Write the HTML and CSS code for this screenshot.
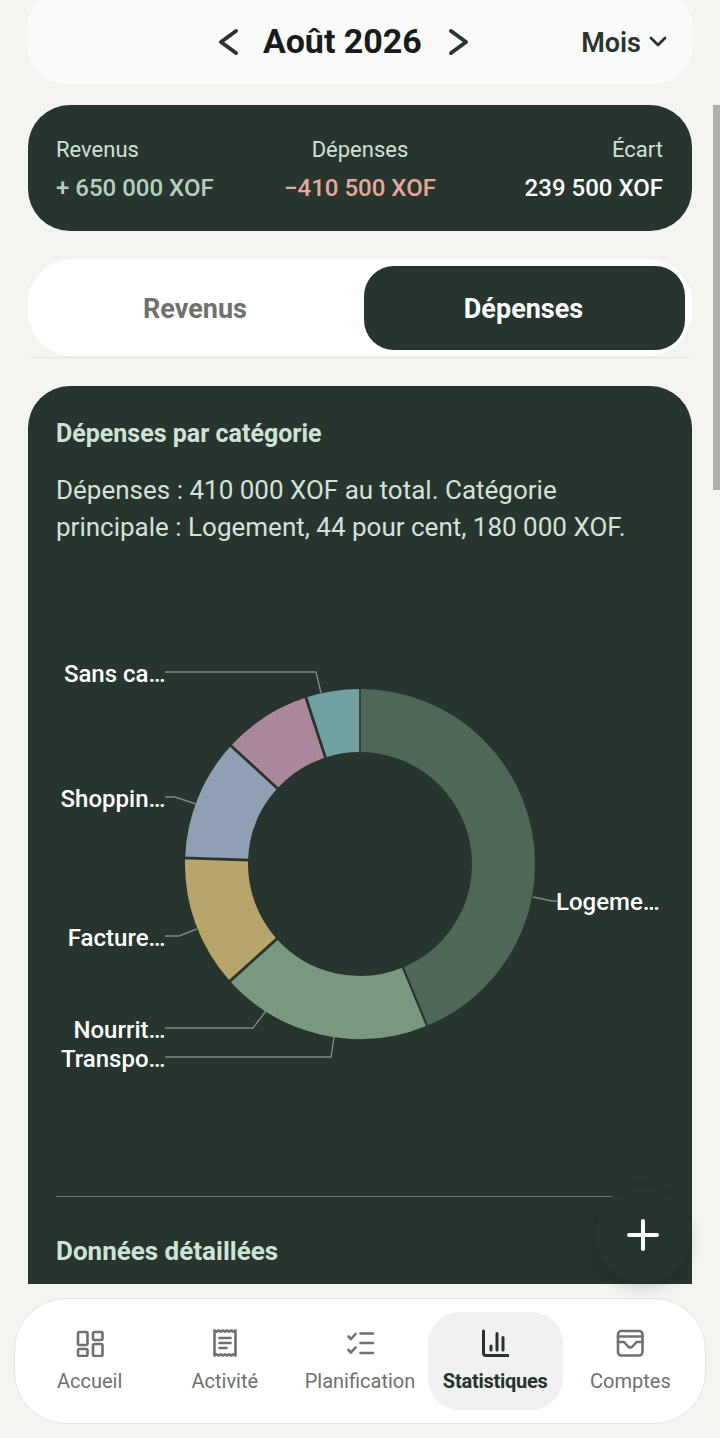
FILE: index.html
```html
<!DOCTYPE html>
<html lang="fr">
<head>
<meta charset="utf-8">
<title>Statistiques</title>
<link rel="stylesheet" href="styles.css">
</head>
<body>
<div class="app">
  <main class="content">
    <header class="period">
      <div class="period-nav">
        <svg class="chev" viewBox="0 0 20 28"><path d="M18 3 3 14l15 11"/></svg>
        <h1 class="period-title">Août 2026</h1>
        <svg class="chev" viewBox="0 0 20 28"><path d="M4 3l15 11L4 25"/></svg>
      </div>
      <div class="range">Mois<svg class="chev-small" viewBox="0 0 18 12"><path d="M2 2l7 7 7-7"/></svg></div>
    </header>

    <section class="summary">
      <div class="sum-col"><span class="sum-label">Revenus</span><span class="sum-value income">+ 650 000 XOF</span></div>
      <div class="sum-col center"><span class="sum-label">Dépenses</span><span class="sum-value expense">−410 500 XOF</span></div>
      <div class="sum-col right"><span class="sum-label">Écart</span><span class="sum-value net">239 500 XOF</span></div>
    </section>

    <div class="tabs-wrap">
      <div class="tabs">
        <div class="tab">Revenus</div>
        <div class="tab active">Dépenses</div>
      </div>
    </div>

    <section class="card">
      <h2 class="card-title">Dépenses par catégorie</h2>
      <p class="card-desc">Dépenses : 410 000 XOF au total. Catégorie principale : Logement, 44 pour cent, 180 000 XOF.</p>
      <svg class="chart" viewBox="28 560 664 620">
        <g fill="none" stroke-width="63">
          <circle cx="360" cy="864" r="143.5" pathLength="360" stroke="#4e6757" stroke-dasharray="157.5 202.5" transform="rotate(-90 360 864)"/>
          <circle cx="360" cy="864" r="143.5" pathLength="360" stroke="#789880" stroke-dasharray="70.5 289.5" transform="rotate(67.5 360 864)"/>
          <circle cx="360" cy="864" r="143.5" pathLength="360" stroke="#b8a56c" stroke-dasharray="44 316" transform="rotate(138 360 864)"/>
          <circle cx="360" cy="864" r="143.5" pathLength="360" stroke="#909fb3" stroke-dasharray="40.5 319.5" transform="rotate(182 360 864)"/>
          <circle cx="360" cy="864" r="143.5" pathLength="360" stroke="#ab879b" stroke-dasharray="30 330" transform="rotate(222.5 360 864)"/>
          <circle cx="360" cy="864" r="143.5" pathLength="360" stroke="#70a0a0" stroke-dasharray="18 342" transform="rotate(252 360 864)"/>
        </g>
        <g class="seps" transform="translate(360 864)">
          <line y1="-110" y2="-178"/>
          <line class="mid" y1="-110" y2="-178" transform="rotate(157.5)"/>
          <line class="thick" y1="-110" y2="-178" transform="rotate(228)"/>
          <line class="thick" y1="-110" y2="-178" transform="rotate(272)"/>
          <line class="thick" y1="-110" y2="-178" transform="rotate(312.5)"/>
          <line class="thick" y1="-110" y2="-178" transform="rotate(342)"/>
        </g>
        <g class="leaders">
          <path d="M165 672H316L321 693"/>
          <path d="M165 797H175L196 804"/>
          <path d="M165 936H179L197 929"/>
          <path d="M165 1028H253L266 1011"/>
          <path d="M165 1057H331L334 1037"/>
          <path d="M533 897L552 901H557"/>
        </g>
        <g class="labels">
          <text x="165.500" y="682" text-anchor="end">Sans ca…</text>
          <text x="165.500" y="807" text-anchor="end">Shoppin…</text>
          <text x="165.500" y="946" text-anchor="end">Facture…</text>
          <text x="165.500" y="1038" text-anchor="end">Nourrit…</text>
          <text x="165.500" y="1067" text-anchor="end">Transpo…</text>
          <text x="556" y="910">Logeme…</text>
        </g>
      </svg>
      <div class="divider"></div>
      <h2 class="card-title detail">Données détaillées</h2>
    </section>
  </main>

  <nav class="bottom-nav">
    <a class="nav-item">
      <svg class="nav-icon" viewBox="0 0 28 28"><rect x="2" y="3" width="9.500" height="13" rx="1.500"/><rect x="17" y="3" width="9.500" height="8" rx="1.500"/><rect x="2" y="20" width="9.500" height="7" rx="1.500"/><rect x="17" y="15" width="9.500" height="12" rx="1.500"/></svg>
      <span>Accueil</span>
    </a>
    <a class="nav-item">
      <svg class="nav-icon" viewBox="0 0 28 28"><path d="M3.500 1.500v25l2.100-1.200 2.100 1.200 2.100-1.200 2.100 1.200 2.100-1.200 2.100 1.200 2.100-1.200 2.100 1.200 2.100-1.200 2.100 1.200v-25l-2.100 1.200-2.100-1.200-2.100 1.200-2.100-1.200-2.100 1.200-2.100-1.200-2.100 1.200-2.100-1.200-2.100 1.200z"/><path d="M8.500 9h11M8.500 14h11M8.500 19h7"/></svg>
      <span>Activité</span>
    </a>
    <a class="nav-item">
      <svg class="nav-icon" viewBox="0 0 28 28"><path d="M2.500 7.500l2.500 2.500 4.500-5M2.500 21l2.500 2.500 4.500-5M14.500 4.500h12.500M14.500 14h12.500M14.500 24h12.500"/></svg>
      <span>Planification</span>
    </a>
    <a class="nav-item active">
      <svg class="nav-icon" viewBox="0 0 28 28"><path d="M2.500 2v22a2.500 2.500 0 0 0 2.500 2.500h22"/><path d="M10 17v4M16 4.500V21M22 8.500V21"/></svg>
      <span>Statistiques</span>
    </a>
    <a class="nav-item">
      <svg class="nav-icon" viewBox="0 0 28 28"><rect x="2" y="2" width="24.500" height="24.500" rx="3.500"/><path d="M2 7.500h24.500M2 13h6l4 4.500c1.200 1 3.300 1 4.500 0l4-4.500h6"/></svg>
      <span>Comptes</span>
    </a>
  </nav>

  <div class="scrollbar"></div>
  <button class="fab" aria-label="Ajouter"><svg viewBox="0 0 32 32"><path d="M16 2v28M2 16h28"/></svg></button>
</div>
</body>
</html>
```
FILE: styles.css
```css
* { box-sizing: border-box; }
html, body { margin: 0; padding: 0; }
body { font-family: Roboto, "Noto Sans", sans-serif; background: #f4f5f1; color: #1a1f1c; }
.app { position: relative; width: 720px; height: 1438px; overflow: hidden; background: #f4f5f1; }
.content { height: 1284px; padding: 0 28px; overflow: hidden; display: flex; flex-direction: column; }

.period { flex: none; margin-top: -10px; height: 94px; padding: 10px 25px 0 190px; border-radius: 36px; background: #fafbf9; display: flex; align-items: center; justify-content: space-between; }
.period-nav { display: flex; align-items: center; gap: 25px; }
.period-title { margin: -2px 0 0; font-size: 34px; font-weight: 700; color: #171b19; line-height: 40px; }
.chev { width: 20px; height: 28px; overflow: visible; fill: none; stroke: #27352e; stroke-width: 4; stroke-linecap: round; stroke-linejoin: round; }
.range { display: flex; align-items: center; gap: 8px; padding-top: 2px; font-size: 27px; font-weight: 600; color: #27352e; }
.chev-small { width: 18px; height: 12px; margin-top: -2px; fill: none; stroke: #27352e; stroke-width: 2.8; stroke-linecap: round; stroke-linejoin: round; }

.summary { flex: none; margin-top: 21px; height: 126px; padding: 31px 28px 0; border-radius: 42px; background: #27352e; display: grid; grid-template-columns: 1fr 1fr 1fr; }
.sum-col { display: flex; flex-direction: column; gap: 10px; white-space: nowrap; }
.center { align-items: center; }
.right { align-items: flex-end; padding-right: 1px; }
.sum-label { font-size: 22px; line-height: 28px; color: #cfe0d5; }
.sum-value { font-size: 24px; line-height: 28px; font-weight: 500; }
.income { color: #b6d0bf; }
.expense { color: #e6a899; }
.net { color: #fff; }

.tabs-wrap { flex: none; margin-top: 28px; height: 99px; border-bottom: 1px solid #e6e7e3; }
.tabs { height: 97px; padding: 7px 7px 6px 0; background: #fff; border-radius: 44px; display: flex; }
.tab { flex: 1; display: flex; align-items: center; justify-content: center; height: 84px; padding: 2px 2px 0 0; border-radius: 30px; font-size: 27px; font-weight: 700; color: #6f716d; }
.tab.active { flex: none; width: 321px; background: #27352e; color: #fff; }

.card { flex: none; margin-top: 28px; height: 898px; padding: 31px 28px 0; border-radius: 42px 42px 0 0; background: #27352e; }
.card-title { margin: 0; font-size: 25px; line-height: 34px; font-weight: 700; color: #cfe3d6; }
.card-desc { margin: 21px 0 0; font-size: 26px; line-height: 37px; color: #d3e2d9; }
.chart { display: block; width: 664px; height: 620px; margin: 14px -28px 0; }
.seps line { stroke: #27352e; stroke-width: 1.6; }
.seps line.mid { stroke-width: 2.2; }
.seps line.thick { stroke-width: 2.8; }
.leaders path { fill: none; stroke: #7b8b83; stroke-width: 1.4; }
.labels text { font-family: Roboto, sans-serif; font-size: 24px; font-weight: 500; fill: #fff; }
.divider { width: 556px; height: 1px; margin-top: 16px; background: #6e7d75; }
.detail { margin-top: 37px; font-size: 26px; }

.bottom-nav { position: absolute; left: 14px; top: 1298px; width: 692px; height: 126px; padding: 13px 7px; background: #fff; border: 1px solid #e4e5e2; border-radius: 52px; display: flex; }
.nav-item { flex: 1; height: 98px; border-radius: 32px; display: flex; flex-direction: column; align-items: center; padding-top: 17px; gap: 11px; font-size: 20px; line-height: 26px; color: #6f716d; white-space: nowrap; }
.nav-item.active { background: #f0f1f0; color: #26332d; font-weight: 700; letter-spacing: -.25px; }
.nav-icon { width: 28px; height: 28px; fill: none; stroke: #6f716d; stroke-width: 2.6; stroke-linecap: round; stroke-linejoin: round; }
.active .nav-icon { stroke: #26332d; stroke-width: 3; }

.scrollbar { position: absolute; right: 0; top: 105px; width: 7px; height: 385px; background: #aeaeac; }
.fab { position: absolute; left: 595px; top: 1187px; width: 96px; height: 96px; padding: 0; border: 0; border-radius: 50%; background: #27352e; box-shadow: 0 6px 14px rgba(0, 0, 0, .13); display: flex; align-items: center; justify-content: center; }
.fab svg { width: 32px; height: 32px; fill: none; stroke: #fff; stroke-width: 4; stroke-linecap: round; }
```
